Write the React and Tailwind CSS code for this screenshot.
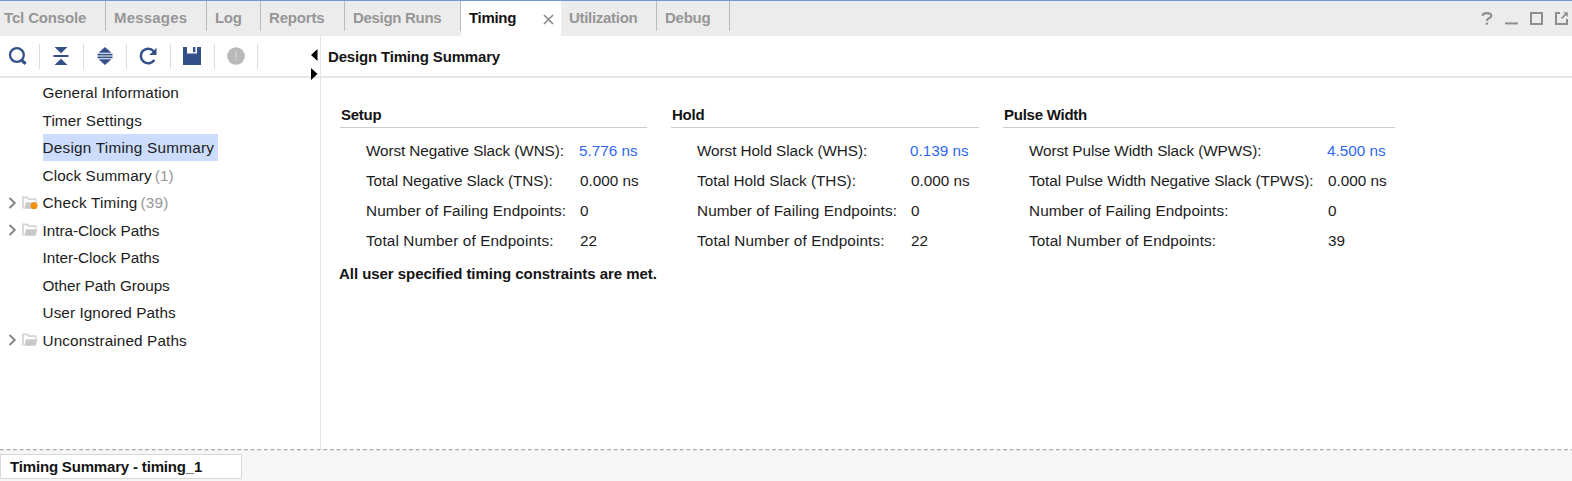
const tabs = [
  { label: 'Tcl Console', cls: 'w-[106px] pl-1 tracking-[-0.15px]', sep: true },
  { label: 'Messages', cls: 'w-[101px] pl-2 tracking-[0.2px]', sep: true },
  { label: 'Log', cls: 'w-[54px] pl-2 tracking-[-0.3px]', sep: true },
  { label: 'Reports', cls: 'w-[84px] pl-2 tracking-[-0.17px]', sep: true },
  { label: 'Design Runs', cls: 'w-[116px] pl-2 tracking-[-0.3px]', sep: true },
  { label: 'Timing', cls: 'w-[100px] pl-2 tracking-[-0.3px]', active: true },
  { label: 'Utilization', cls: 'w-[96px] pl-2 tracking-[-0.3px]', sep: true },
  { label: 'Debug', cls: 'w-[73px] pl-2 tracking-[-0.25px]', sep: true },
];

const tree = [
  { label: 'General Information', cls: 'tracking-[0.06px]' },
  { label: 'Timer Settings', cls: 'tracking-[0.1px]' },
  { label: 'Design Timing Summary', cls: 'tracking-[0.24px]', selected: true },
  { label: 'Clock Summary', cls: 'tracking-[0.1px]', count: 1 },
  { label: 'Check Timing', cls: 'tracking-[0.2px]', count: 39, folder: true, dot: true },
  { label: 'Intra-Clock Paths', cls: 'tracking-[-0.02px]', folder: true },
  { label: 'Inter-Clock Paths', cls: 'tracking-[-0.02px]' },
  { label: 'Other Path Groups', cls: 'tracking-[-0.07px]' },
  { label: 'User Ignored Paths', cls: 'tracking-[0.08px]' },
  { label: 'Unconstrained Paths', cls: 'tracking-[0.12px]', folder: true },
];

const groups = [
  {
    title: 'Setup',
    width: 'w-[307px]',
    labelWidth: 'w-[214px]',
    rows: [
      ['Worst Negative Slack (WNS):', '5.776 ns', 'tracking-[-0.09px]'],
      ['Total Negative Slack (TNS):', '0.000 ns', 'tracking-[-0.04px]'],
      ['Number of Failing Endpoints:', '0', 'tracking-[0.1px]'],
      ['Total Number of Endpoints:', '22', 'tracking-[0.12px]'],
    ],
  },
  {
    title: 'Hold',
    width: 'w-[308px]',
    labelWidth: 'w-[214px]',
    rows: [
      ['Worst Hold Slack (WHS):', '0.139 ns', 'tracking-[-0.05px]'],
      ['Total Hold Slack (THS):', '0.000 ns', 'tracking-[0px]'],
      ['Number of Failing Endpoints:', '0', 'tracking-[0.1px]'],
      ['Total Number of Endpoints:', '22', 'tracking-[0.12px]'],
    ],
  },
  {
    title: 'Pulse Width',
    width: 'w-[392px]',
    labelWidth: 'w-[299px]',
    rows: [
      ['Worst Pulse Width Slack (WPWS):', '4.500 ns', 'tracking-[-0.09px]'],
      ['Total Pulse Width Negative Slack (TPWS):', '0.000 ns', 'tracking-[-0.07px]'],
      ['Number of Failing Endpoints:', '0', 'tracking-[0.08px]'],
      ['Total Number of Endpoints:', '39', 'tracking-[0.1px]'],
    ],
  },
];

function ToolCell({ first, children }) {
  return (
    <div className={`${first ? 'w-10' : 'w-[43.7px]'} flex h-[25px] shrink-0 items-center justify-center border-r border-[#dcdcdc]`}>
      {children}
    </div>
  );
}

function Toolbar() {
  return (
    <div className="flex h-10 w-[320px] items-center">
      <ToolCell first>
        <svg width="20" height="20" viewBox="0 0 20 20" fill="none" stroke="#34508a" className="-ml-1">
          <circle cx="8.9" cy="9" r="6.9" strokeWidth="2.3" />
          <path d="M13.4 13.8l4.2 4" strokeWidth="3.2" />
        </svg>
      </ToolCell>
      <ToolCell>
        <svg width="16" height="18" viewBox="0 0 16 18" fill="#34508a">
          <path d="M1.5 0h13L8 6.3zM0.5 7.9h15v2.2h-15zM8 11.7l6.500 6.300h-13z" />
        </svg>
      </ToolCell>
      <ToolCell>
        <svg width="16" height="18" viewBox="0 0 16 18" fill="#34508a">
          <path d="M8 0l6.400 5.700H1.600zM0.500 6.700h15v1.700h-15zM0.500 9.600h15v1.700h-15zM1.600 12.300h12.800L8 18z" />
        </svg>
      </ToolCell>
      <ToolCell>
        <svg width="20" height="20" viewBox="0 0 20 20" fill="none" stroke="#34508a" className="-ml-px">
          <path d="M15.700 5.200A7.300 7.300 0 1 0 16.400 13.800" strokeWidth="2.500" />
          <path d="M18.500 1.800v7.200h-7.200z" fill="#34508a" stroke="none" />
        </svg>
      </ToolCell>
      <ToolCell>
        <svg width="18" height="18" viewBox="0 0 18 18" fill="#34508a">
          <path d="M0 0h4v6.500h10V0h4V18H0z" />
          <path d="M10 0h2.400v5.200H10z" />
        </svg>
      </ToolCell>
      <ToolCell>
        <svg width="18" height="18" viewBox="0 0 18 18">
          <circle cx="9" cy="9" r="8.800" fill="#b9b9b9" />
          <path d="M8.200 4h1.600v6.500h-1.600zM8.200 12h1.600v2h-1.600z" fill="#d0d0d0" />
        </svg>
      </ToolCell>
    </div>
  );
}

function Folder({ dot }) {
  return (
    <svg width="16" height="14" viewBox="0 0 16 14" className="ml-[5px] shrink-0">
      <path d="M0.900 12.500V1.400h4.600l1.300 1.800h6.900v2.300" fill="none" stroke="#d4d4d4" strokeWidth="1.700" />
      <path d="M4 6.200h11.400L13.600 12.800H2.200z" fill="#c9c9c9" />
      {dot && <circle cx="12" cy="9.700" r="3.500" fill="#f2920f" />}
    </svg>
  );
}

export default function App() {
  return (
    <div className="flex h-[481px] w-[1572px] flex-col overflow-hidden bg-white font-['Liberation_Sans',Arial,sans-serif] text-[15.3px] leading-none text-[#1c1c1c]">
      <header className="flex h-9 shrink-0 border-t border-[#7396d8] bg-[#ececec] text-[15px] font-bold text-[#969696]">
        {tabs.map((t) => (
          <div key={t.label} className={`${t.cls} flex shrink-0 items-start whitespace-nowrap ${t.active ? 'bg-white text-[#141414]' : ''}`}>
            <span className="pt-[9px] leading-4">{t.label}</span>
            {t.active && (
              <svg width="11" height="11" viewBox="0 0 11 11" className="mr-[7px] mt-[13px] ml-auto" stroke="#8d8d8d" strokeWidth="1.700">
                <path d="M1 1l9 9M10 1l-9 9" />
              </svg>
            )}
            {t.sep && <span className="ml-auto h-[30px] w-px bg-[#bdbdbd]" />}
          </div>
        ))}
        <div className="ml-auto flex items-start gap-[12px] pt-[11px] pr-1">
          <svg width="12" height="13" viewBox="0 0 12 13" fill="none" stroke="#8e8e8e" strokeWidth="2.100">
            <path d="M1.500 3.900Q1.700 1.100 5.900 1.100 10.300 1.100 10.300 3.700 10.300 5.300 7.900 6.200 6 7 6 9" />
            <path d="M4.800 11.600h2.400" />
          </svg>
          <svg width="13" height="13" viewBox="0 0 13 13"><path d="M0 10.400h13v2H0z" fill="#8e8e8e" /></svg>
          <svg width="13" height="13" viewBox="0 0 13 13"><path d="M1 1h11v11H1z" fill="none" stroke="#8e8e8e" strokeWidth="2" /></svg>
          <svg width="13" height="13" viewBox="0 0 13 13" fill="none" stroke="#8e8e8e" strokeWidth="2">
            <path d="M5 1H1v11h11V7" />
            <path d="M6.500 6.500L10.800 2.200" strokeWidth="1.700" />
            <path d="M8.200 0.300H12.800v4.600z" fill="#8e8e8e" stroke="none" />
          </svg>
        </div>
      </header>

      <main className="flex h-[413px] shrink-0">
        <aside className="relative flex w-[321px] shrink-0 flex-col border-r border-[#e4e4e4]">
          <Toolbar />
          <div className="h-[2px] w-full bg-[#e6e6e6]" />
          <svg width="7" height="32" viewBox="0 0 7 32" className="absolute top-[13px] left-[311px]" fill="#000">
            <path d="M6.500 0v12L0 6zM0 19v12l6.500-6z" />
          </svg>
          <ul className="pt-[0.800px]">
            {tree.map((n) => (
              <li key={n.label} className="flex h-[27.5px] items-center whitespace-nowrap">
                <div className="flex w-[42.5px] items-center pl-2">
                  {n.folder && (
                    <>
                      <svg width="9" height="12" viewBox="0 0 9 12" className="shrink-0" fill="none" stroke="#808080" strokeWidth="1.800">
                        <path d="M1.500 1l5.300 5-5.300 5" />
                      </svg>
                      <Folder dot={n.dot} />
                    </>
                  )}
                </div>
                <span className={`${n.cls} flex h-full items-center pt-px ${n.selected ? 'w-[175px] bg-[#cbdcfd]' : ''}`}>
                  {n.label}
                  {n.count && <span className="ml-[3px] text-[#969696]">({n.count})</span>}
                </span>
              </li>
            ))}
          </ul>
        </aside>

        <section className="flex flex-1 flex-col">
          <h1 className="flex h-10 items-center pl-[7px] text-[15px] font-bold tracking-[-0.17px] text-[#141414]">Design Timing Summary</h1>
          <div className="h-[2px] bg-[#e6e6e6]" />
          <div className="flex gap-6 pt-[27px] pl-[19px]">
            {groups.map((g) => (
              <div key={g.title} className={`${g.width} shrink-0`}>
                <h2 className="flex h-[23px] items-center border-b border-[#cccccc] pb-[3px] pl-px text-[15px] font-bold tracking-[-0.25px] text-[#141414]">{g.title}</h2>
                <div className="pt-2 pl-[26px]">
                  {g.rows.map(([label, value, tracking], i) => (
                    <div key={label} className="flex h-[30px] items-center whitespace-nowrap">
                      <span className={`${g.labelWidth} ${tracking} shrink-0`}>{label}</span>
                      <span className={i === 0 ? '-ml-px text-[#3068f0]' : ''}>{value}</span>
                    </div>
                  ))}
                </div>
              </div>
            ))}
          </div>
          <p className="mt-[10px] pl-[18px] text-[15px] font-bold tracking-[-0.05px] text-[#141414]">All user specified timing constraints are met.</p>
        </section>
      </main>

      <footer className="flex flex-1 flex-col bg-[#f6f6f6]">
        <svg width="1572" height="2" viewBox="0 0 1572 2" className="shrink-0">
          <path d="M0 .600h1572" stroke="#a9a9a9" strokeWidth="1.300" strokeDasharray="3.700 2.900" />
        </svg>
        <div className="mt-[3px] flex h-[25px] w-[242px] items-center border border-[#d8d8d8] bg-white pl-[9px] text-[15px] font-bold tracking-[-0.17px] text-[#141414]">
          Timing Summary - timing_1
        </div>
      </footer>
    </div>
  );
}
